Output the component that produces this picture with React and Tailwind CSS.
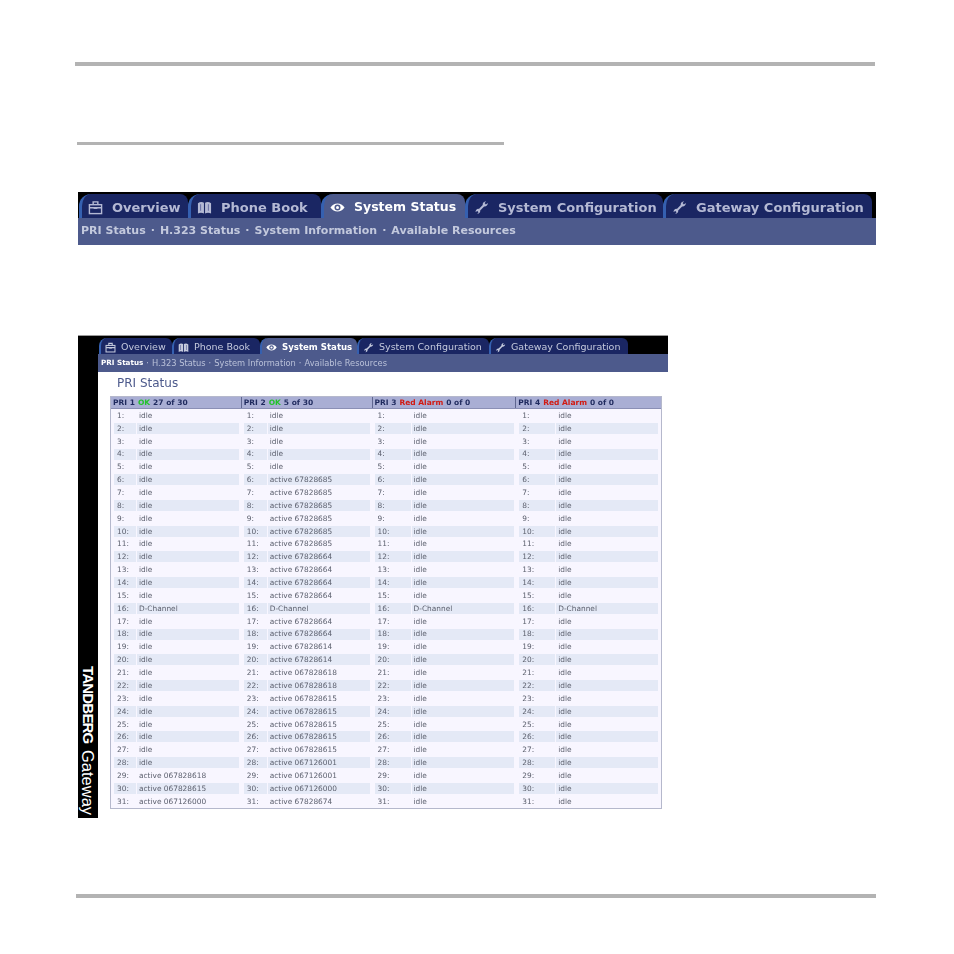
import React from 'react'

const font = "font-['DejaVu_Sans',sans-serif]"

// icons for the tabs, same drawings in both bars
function BagIcon({ className }) {
  return (
    <svg viewBox="0 0 16 16" className={className} fill="none" stroke="currentColor" strokeWidth="1.5">
      <rect x="1.500" y="5" width="13" height="9.500" />
      <path d="M1.500 8.200h13M5.500 5V2h5v3" />
      <rect x="6" y="7.500" width="4" height="2" fill="currentColor" stroke="none" />
    </svg>
  )
}

function BookIcon({ className }) {
  return (
    <svg viewBox="0 0 16 16" className={className} fill="currentColor">
      <path d="M1 3.500C3 2 5.500 1.800 7.400 3v11.500C5.500 13.300 3 13.300 1 14.500z" />
      <path d="M8.600 3c1.900-1.200 4.400-1 6.400.5v11c-2-1.200-4.500-1.200-6.400 0z" />
      <path d="M3.200 4.500h1.200v7H3.200zM11.600 4.500h1.200v7h-1.200z" fill="#6f76a8" />
    </svg>
  )
}

function EyeIcon({ className }) {
  return (
    <svg viewBox="0 0 16 16" className={className} fill="currentColor">
      <path d="M.5 8C2.500 5 5 3.700 8 3.700S13.500 5 15.500 8c-2 3-4.500 4.300-7.500 4.300S2.500 11 .5 8z" />
      <circle cx="8" cy="8" r="3.200" fill="#4d5a8c" />
      <circle cx="8" cy="8" r="1.600" fill="currentColor" />
    </svg>
  )
}

function WrenchIcon({ className }) {
  return (
    <svg viewBox="0 0 16 16" className={className} fill="currentColor">
      <path d="M5.200 9.500 9.300 5.400c-.4-1.900 1-3.900 3.700-4.100L11.300 3.200l1.300 1.500 2.200-1.500c-.1 2.600-2.100 4-4 3.600l-4.200 4.300c.4 1.800-1 3.500-3.200 3.700l1.400-1.800-1.200-1.400-2 1.300c.1-2.300 1.800-3.900 3.600-3.400z" />
    </svg>
  )
}

const bigTabs = [
  { label: 'Overview', icon: BagIcon, width: 'w-[109px]' },
  { label: 'Phone Book', icon: BookIcon, width: 'w-[133px]' },
  { label: 'System Status', icon: EyeIcon, width: 'w-[144px]', active: true },
  { label: 'System Configuration', icon: WrenchIcon, width: 'w-[198px]' },
  { label: 'Gateway Configuration', icon: WrenchIcon, width: 'w-[209px]' },
]

const smallTabs = [
  { label: 'Overview', icon: BagIcon, width: 'w-[73px]' },
  { label: 'Phone Book', icon: BookIcon, width: 'w-[88px]' },
  { label: 'System Status', icon: EyeIcon, width: 'w-[97px]', active: true },
  { label: 'System Configuration', icon: WrenchIcon, width: 'w-[132px]' },
  { label: 'Gateway Configuration', icon: WrenchIcon, width: 'w-[139px]' },
]

const subLinks = ['PRI Status', 'H.323 Status', 'System Information', 'Available Resources']

function BigBar() {
  return (
    <div className={`ml-[78px] w-[798px] blur-[0.4px] ${font}`}>
      <div className="flex h-[26px] items-end bg-black pl-[1px]">
        {bigTabs.map((tab) => {
          const Icon = tab.icon
          return (
            <div
              key={tab.label}
              className={`flex h-[24px] shrink-0 items-center rounded-tl-[12px] rounded-tr-[8px] border-l-[3px] border-[#3560b0] pl-[6px] pt-[3px] font-bold ${tab.width} ${
                tab.active ? 'bg-[#4d5a8c] text-[12.500px] text-white' : 'bg-[#1a2663] text-[13px] text-[#b4b9d4]'
              }`}
            >
              <Icon className="mr-[9px] h-[15px] w-[15px] shrink-0" />
              <span className="whitespace-nowrap">{tab.label}</span>
            </div>
          )
        })}
      </div>
      <div className="flex h-[27px] items-center gap-[5px] bg-[#4d5a8c] pl-[3px] text-[11px] font-bold text-[#c3c9dd]">
        {subLinks.map((link, i) => (
          <React.Fragment key={link}>
            {i > 0 && <span>·</span>}
            <span className="whitespace-nowrap">{link}</span>
          </React.Fragment>
        ))}
      </div>
    </div>
  )
}

function SmallBar() {
  return (
    <div className={font}>
      <div className="flex h-[18px] items-end bg-black pl-[1px]">
        {smallTabs.map((tab) => {
          const Icon = tab.icon
          return (
            <div
              key={tab.label}
              className={`flex h-[16px] shrink-0 items-center rounded-tl-[8px] rounded-tr-[6px] border-l-2 border-[#3560b0] pl-[4px] pt-[2px] ${tab.width} ${
                tab.active ? 'bg-[#4d5a8c] text-[8.600px] font-bold text-white' : 'bg-[#1a2663] text-[9.500px] text-[#c5cadd]'
              }`}
            >
              <Icon className="mr-[5px] h-[11px] w-[11px] shrink-0" />
              <span className="whitespace-nowrap">{tab.label}</span>
            </div>
          )
        })}
      </div>
      <div className="flex h-[18px] items-center gap-[3px] bg-[#4d5a8c] pl-[3px] text-[8.300px] text-[#b9c0d8]">
        {subLinks.map((link, i) => (
          <React.Fragment key={link}>
            {i > 0 && <span>·</span>}
            <span className={i === 0 ? 'whitespace-nowrap text-[7.200px] font-bold text-white' : 'whitespace-nowrap'}>{link}</span>
          </React.Fragment>
        ))}
      </div>
    </div>
  )
}

const idle = (n) => (n === 16 ? 'D-Channel' : 'idle')

function pri1(n) {
  if (n === 29) return 'active 067828618'
  if (n === 30) return 'active 067828615'
  if (n === 31) return 'active 067126000'
  return idle(n)
}

function pri2(n) {
  if (n < 6 || n === 16) return idle(n)
  if (n <= 11) return 'active 67828685'
  if (n <= 18) return 'active 67828664'
  if (n <= 20) return 'active 67828614'
  if (n <= 22) return 'active 067828618'
  if (n <= 27) return 'active 067828615'
  if (n <= 29) return 'active 067126001'
  if (n === 30) return 'active 067126000'
  return 'active 67828674'
}

const columns = [
  { name: 'PRI 1', state: 'OK', tone: 'text-[#22c32a]', rest: '27 of 30', value: pri1, width: 'w-[131px]', num: 'w-[22px]', val: 'w-[102px]', pad: 'pl-[3px]' },
  { name: 'PRI 2', state: 'OK', tone: 'text-[#22c32a]', rest: '5 of 30', value: pri2, width: 'w-[131px]', num: 'w-[23px]', val: 'w-[102px]', pad: 'pl-[2px]' },
  { name: 'PRI 3', state: 'Red Alarm', tone: 'text-[#d21a12]', rest: '0 of 0', value: idle, width: 'w-[144px]', num: 'w-[36px]', val: 'w-[102px]', pad: 'pl-[2px]' },
  { name: 'PRI 4', state: 'Red Alarm', tone: 'text-[#d21a12]', rest: '0 of 0', value: idle, width: 'w-[145px]', num: 'w-[36px]', val: 'w-[102px]', pad: 'pl-[3px]' },
]

const rows = Array.from({ length: 31 }, (_, i) => i + 1)

function PriTable() {
  return (
    <div className="ml-[12px] w-[552px] border border-[#b5b8cc] bg-[#f8f6ff]">
      <div className="flex h-[12px] border-b border-[#8a8fb5] bg-[#a9aed4] text-[7.500px] font-bold text-[#1f2a5e]">
        {columns.map((col) => (
          <div key={col.name} className={`flex items-center gap-[3px] border-r border-[#5f6690] pl-[2px] last:border-r-0 ${col.width}`}>
            <span>{col.name}</span>
            <span className={col.tone}>{col.state}</span>
            <span>{col.rest}</span>
          </div>
        ))}
      </div>
      <div className="flex text-[7.400px] text-[#5c606e]">
        {columns.map((col) => (
          <div key={col.name} className={`${col.width} ${col.pad}`}>
            {rows.map((n) => (
              <div key={n} className="flex h-[12.870px] items-center gap-[1px]">
                <div className={`flex h-[11px] items-center pl-[3px] ${col.num} ${n % 2 === 0 ? 'bg-[#e4e9f6]' : ''}`}>{n}:</div>
                <div className={`flex h-[11px] items-center pl-[2px] ${col.val} ${n % 2 === 0 ? 'bg-[#e4e9f6]' : ''}`}>{col.value(n)}</div>
              </div>
            ))}
          </div>
        ))}
      </div>
    </div>
  )
}

function Screenshot() {
  return (
    <div className={`ml-[78px] flex h-[483px] w-[590px] border-t border-[#9a9a9a] blur-[0.3px] ${font}`}>
      <div className="flex w-[20px] shrink-0 flex-col items-center justify-end bg-black pb-[3px] font-['Liberation_Sans',sans-serif] text-white">
        <div className="whitespace-nowrap [writing-mode:vertical-rl]">
          <span className="text-[15px] font-bold leading-[20px] tracking-[-0.8px]">TANDBERG</span>
          <span className="mt-[6px] inline-block text-[16.500px] leading-[20px]">Gateway</span>
        </div>
      </div>
      <div className="min-w-0 flex-1">
        <SmallBar />
        <h2 className="ml-[19px] mt-[1px] h-[23px] text-[12px] leading-[20px] text-[#4d5a8c]">PRI Status</h2>
        <PriTable />
      </div>
    </div>
  )
}

export default function App() {
  return (
    <div className="h-[954px] w-[954px] overflow-hidden bg-white pt-[62px]">
      <div className="ml-[75px] h-[4px] w-[800px] bg-[#b3b3b3]" />
      <div className="ml-[77px] mt-[76px] h-[3px] w-[427px] bg-[#b3b3b3]" />
      <div className="mt-[47px]">
        <BigBar />
      </div>
      <div className="mt-[90px]">
        <Screenshot />
      </div>
      <div className="ml-[76px] mt-[76px] h-[4px] w-[800px] bg-[#b3b3b3]" />
    </div>
  )
}
